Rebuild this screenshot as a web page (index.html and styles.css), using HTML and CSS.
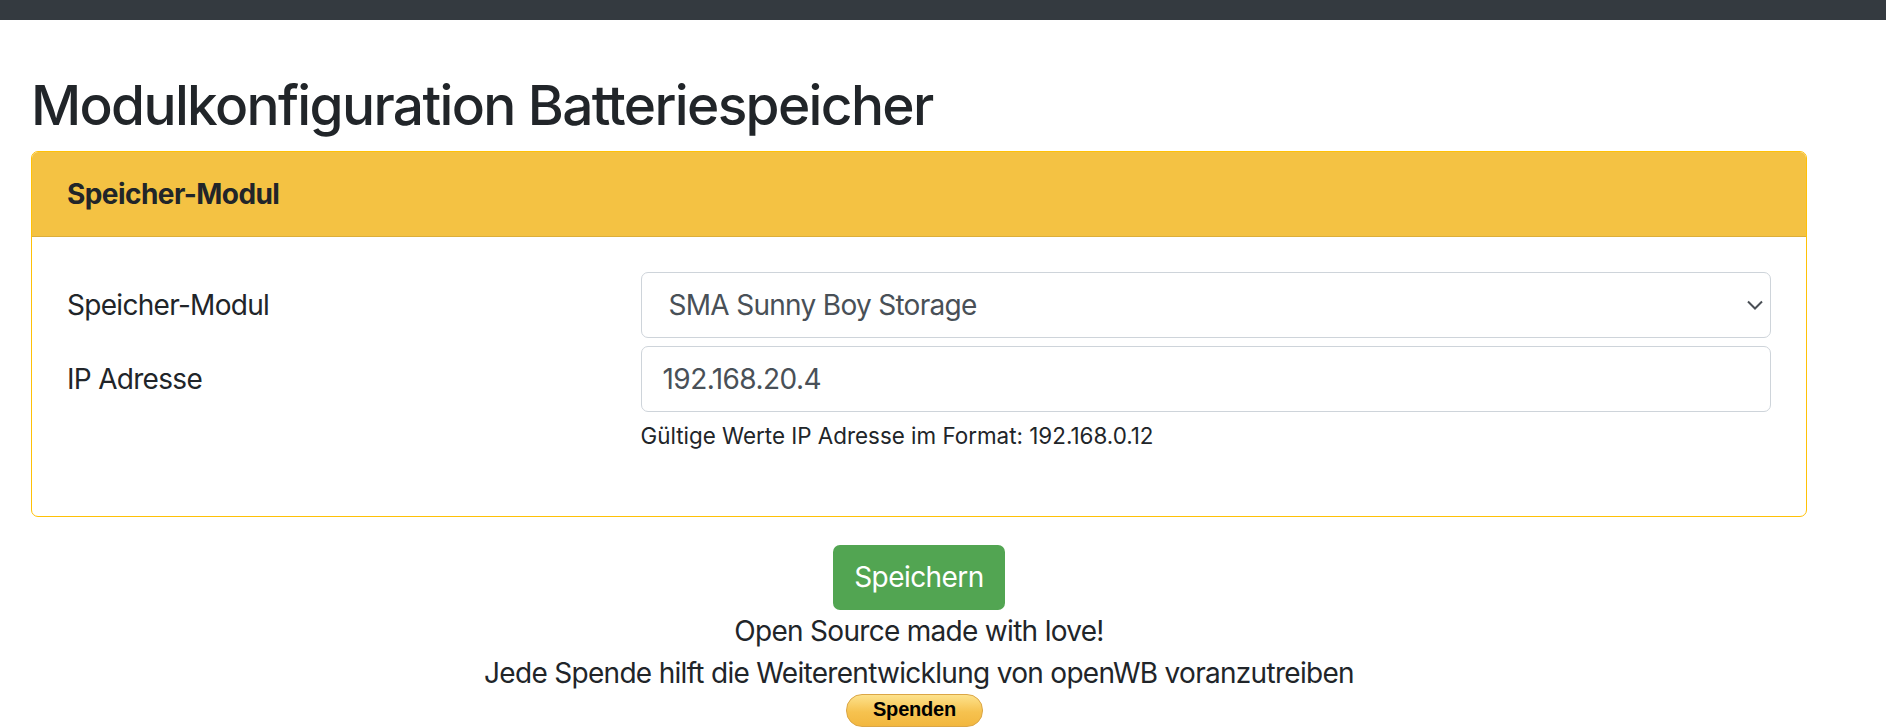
FILE: index.html
```html
<!DOCTYPE html>
<html lang="de">
<head>
    <meta charset="UTF-8">
    <meta name="viewport" content="width=device-width, initial-scale=1.0">
    <title>Modulkonfiguration Batteriespeicher</title>
    <link rel="stylesheet" href="styles.css">
</head>
<body>
    <div class="navbar-strip"></div>
    <div class="container">
        <h1>Modulkonfiguration Batteriespeicher</h1>
        <div class="card">
            <div class="card-header">Speicher-Modul</div>
            <div class="card-body">
                <div class="form-row">
                    <label for="speichermodul" class="col-label">Speicher-Modul</label>
                    <div class="select-wrap">
                        <select id="speichermodul" class="form-control form-select">
                            <option>SMA Sunny Boy Storage</option>
                        </select>
                        <svg class="select-arrow" width="16" height="10" viewBox="0 0 16 10">
                            <path d="M1 1.5l7 7 7-7" fill="none" stroke="#4a4f55" stroke-width="2"/>
                        </svg>
                    </div>
                </div>
                <div class="form-row form-group">
                    <label for="speicher_ip" class="col-label">IP Adresse</label>
                    <div>
                        <input type="text" id="speicher_ip" class="form-control" value="192.168.20.4">
                        <small class="form-text">Gültige Werte IP Adresse im Format: 192.168.0.12</small>
                    </div>
                </div>
            </div>
        </div>
        <div class="footer">
            <button class="btn-save">Speichern</button>
            <p>Open Source made with love!</p>
            <p>Jede Spende hilft die Weiterentwicklung von openWB voranzutreiben</p>
            <button class="btn-donate">Spenden</button>
        </div>
    </div>
</body>
</html>
```

FILE: styles.css
```css
body {
    margin: 0;
    font-family: Inter, "Liberation Sans", sans-serif;
    font-size: 28px;
    line-height: 1.5;
    color: #212529;
    background: #fff;
}
.navbar-strip {
    height: 20px;
    background-color: #343a40;
}
.container {
    margin-left: 31px;
    width: 1776px;
}
h1 {
    font-size: 55px;
    font-weight: 500;
    line-height: 1.2;
    letter-spacing: -0.03em;
    margin: 52px 0 13px 0;
}
.card {
    border: 1px solid #ffc107;
    border-radius: 7px;
}
.card-header {
    background-color: #f4c243;
    border-bottom: 1px solid #dcae3a;
    border-radius: 6px 6px 0 0;
    padding: 21px 35px;
    font-weight: bold;
    letter-spacing: -0.02em;
}
.card-body {
    padding: 35px;
}
.form-row {
    display: grid;
    grid-template-columns: 573.5px 1fr;
    margin-bottom: 8px;
}
.form-row.form-group {
    margin-bottom: 28px;
}
.col-label {
    padding-top: 11.5px;
    letter-spacing: -0.025em;
}
.form-control {
    display: block;
    box-sizing: border-box;
    width: 100%;
    height: 66px;
    padding: 10.5px 21px;
    font-family: inherit;
    font-size: 28px;
    line-height: 1.5;
    letter-spacing: -0.02em;
    color: #495057;
    background-color: #fff;
    border: 1px solid #ced4da;
    border-radius: 7px;
    margin: 0;
}
.select-wrap {
    position: relative;
}
.form-select {
    -webkit-appearance: none;
    appearance: none;
    padding-left: 27px;
    letter-spacing: -0.025em;
}
.select-arrow {
    position: absolute;
    right: 8px;
    top: 28px;
    pointer-events: none;
}
.form-text {
    display: block;
    margin-top: 7px;
    font-size: 22.4px;
    letter-spacing: 0;
}
.footer {
    text-align: center;
    letter-spacing: -0.025em;
}
.footer p {
    margin: 0;
}
.btn-save {
    margin-top: 28px;
    height: 65px;
    padding: 10.5px 21px;
    font-family: inherit;
    font-size: 28px;
    line-height: 1.5;
    letter-spacing: -0.02em;
    color: #fff;
    background-color: #52a552;
    border: none;
    border-radius: 7px;
    cursor: pointer;
}
.btn-donate {
    display: block;
    margin: 0 0 0 815px;
    width: 137px;
    height: 33px;
    padding: 0 0 2px 0;
    font-family: "Liberation Sans", Arial, sans-serif;
    font-size: 20px;
    font-weight: bold;
    letter-spacing: -0.01em;
    color: #000;
    background: linear-gradient(#fde28c, #f6c24f 55%, #f2b73f);
    border: 1.5px solid #dba646;
    border-radius: 16px;
    cursor: pointer;
}
```
